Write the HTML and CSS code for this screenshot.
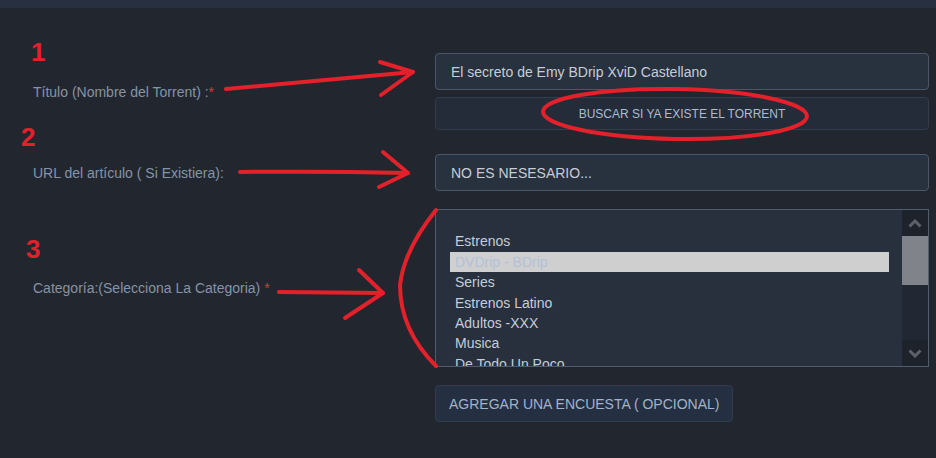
FILE: index.html
```html
<!DOCTYPE html>
<html>
  <head>
    <title>Subir Torrent</title>
    <link rel="stylesheet" href="styles.css">
  </head>
  <body>
    <div class="topbar"></div>

    <div class="form">
      <label class="label" for="titulo">Título (Nombre del Torrent) :<span class="req">*</span></label>
      <div class="field stack">
        <input class="input" id="titulo" type="text" value="El secreto de Emy BDrip XviD Castellano">
        <button class="btn btn-wide">BUSCAR SI YA EXISTE EL TORRENT</button>
      </div>

      <label class="label row2" for="url">URL del artículo ( Si Existiera):</label>
      <div class="field row2">
        <input class="input" id="url" type="text" value="NO ES NESESARIO...">
      </div>

      <label class="label row3">Categoría:(Selecciona La Categoria) <span class="req">*</span></label>
      <div class="field row3">
        <div class="listbox">
          <ul class="options">
            <li class="option"></li>
            <li class="option">Estrenos</li>
            <li class="option selected">DVDrip - BDrip</li>
            <li class="option">Series</li>
            <li class="option">Estrenos Latino</li>
            <li class="option">Adultos -XXX</li>
            <li class="option">Musica</li>
            <li class="option">De Todo Un Poco</li>
          </ul>
          <div class="scrollbar">
            <div class="sb-btn">
              <svg width="14" height="9" viewBox="0 0 14 9"><polyline points="1.5,7.5 7,2 12.5,7.5" fill="none" stroke="#5d6269" stroke-width="3"/></svg>
            </div>
            <div class="sb-thumb"></div>
            <div class="sb-track"></div>
            <div class="sb-btn">
              <svg width="14" height="9" viewBox="0 0 14 9"><polyline points="1.5,1.5 7,7 12.5,1.5" fill="none" stroke="#5d6269" stroke-width="3"/></svg>
            </div>
          </div>
        </div>
      </div>

      <div class="label row4"></div>
      <div class="field row4">
        <button class="btn btn-poll">AGREGAR UNA ENCUESTA ( OPCIONAL)</button>
      </div>
    </div>

    <!-- red annotations drawn over the page -->
    <svg class="marks" width="936" height="458" viewBox="0 0 936 458">
      <g fill="#e4202b" font-family="Liberation Sans, Arial, sans-serif" font-weight="bold" font-size="26">
        <text x="31" y="61">1</text>
        <text x="21" y="146">2</text>
        <text x="26" y="258">3</text>
      </g>
      <g fill="none" stroke="#e4202b" stroke-width="4" stroke-linecap="round" stroke-linejoin="round">
        <path d="M226 89 L413 72"/>
        <path d="M380 62 L413 72 L381 95"/>
        <path d="M240 172 Q320 171 408 173"/>
        <path d="M383 152 L408 173 L379 187"/>
        <path d="M279 292 L383 293"/>
        <path d="M359 270 L383 293 L345 318"/>
        <path d="M436 210 Q404 250 400 285 Q400 330 436 366"/>
        <ellipse cx="675" cy="114" rx="132" ry="25" transform="rotate(1 675 114)"/>
      </g>
    </svg>
  </body>
</html>
```

FILE: styles.css
```css
body {
  margin: 0;
  width: 936px;
  height: 458px;
  overflow: hidden;
  background-color: #22272f;
  font-family: "Liberation Sans", Arial, sans-serif;
  position: relative;
}
.topbar {
  height: 8px;
  background-color: #263040;
}
.form {
  display: grid;
  grid-template-columns: 402px 494px;
  align-items: center;
  padding: 45px 0 0 33px;
}
.label {
  font-size: 14px;
  color: #8693a6;
}
.req {
  color: #e0323a;
}
.row2,
.row3,
.row4 {
  margin-top: 18px;
}
.row2 {
  margin-top: 24px;
}
.stack {
  display: flex;
  flex-direction: column;
  gap: 7px;
}
.input {
  box-sizing: border-box;
  display: block;
  width: 100%;
  height: 37px;
  padding: 0 15px;
  border: 1px solid #4b5669;
  border-radius: 4px;
  background-color: #28313e;
  color: #c6cdd9;
  font-family: inherit;
  font-size: 14px;
}
.btn {
  box-sizing: border-box;
  display: block;
  border: 1px solid #323c4b;
  border-radius: 4px;
  background-color: #232c38;
  color: #aebbcd;
  font-family: inherit;
  cursor: pointer;
}
.btn-wide {
  width: 100%;
  height: 33px;
  font-size: 12px;
}
.btn-poll {
  height: 37px;
  padding: 0 13px;
  font-size: 14px;
  background-color: #243041;
  color: #a2b2c8;
}
.listbox {
  box-sizing: border-box;
  display: flex;
  height: 158px;
  border: 1px solid #4f5b6f;
  background-color: #28303d;
  overflow: hidden;
}
.options {
  flex: 1;
  list-style: none;
  margin: 0;
  padding: 1px 13px 0 14px;
}
.option {
  height: 20.4px;
  line-height: 20.4px;
  padding-left: 5px;
  font-size: 14px;
  color: #c6cdd9;
  white-space: nowrap;
}
.option.selected {
  background-color: #cfcfcf;
  color: #b3c1d8;
}
.scrollbar {
  display: flex;
  flex-direction: column;
  width: 26px;
  background-color: #222833;
}
.sb-btn {
  display: flex;
  align-items: center;
  justify-content: center;
  height: 26px;
  background-color: #1e222a;
}
.sb-thumb {
  height: 49px;
  background-color: #808389;
}
.sb-track {
  flex: 1;
}
.marks {
  position: absolute;
  top: 0;
  left: 0;
  pointer-events: none;
}
```
